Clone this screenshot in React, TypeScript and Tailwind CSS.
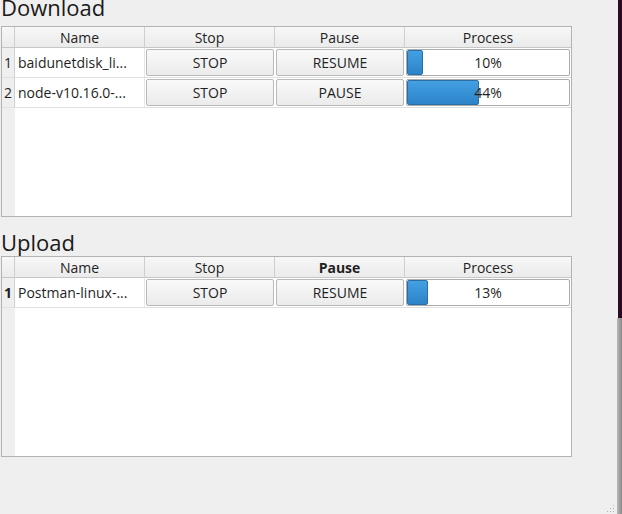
import React from "react";

type Row = { name: string; pause: string; pct: number };

const font = { fontFamily: '"Open Sans", "Noto Sans", sans-serif' };

function Btn({ label }: { label: string }) {
  return (
    <div className="h-full w-full p-[1px]">
      <div className="flex h-full w-full items-center justify-center rounded-[2px] border border-[#b9b9b9] bg-gradient-to-b from-[#f9f9f9] to-[#ebebeb] text-[14px] text-[#1f1f1f]">
        {label}
      </div>
    </div>
  );
}

function Progress({ pct }: { pct: number }) {
  return (
    <div className="h-full w-full p-[1px]">
      <div className="relative h-full w-full rounded-[2px] border border-[#ababab] bg-white">
        <div
          className="absolute left-0 top-0 bottom-0 rounded-[2px] border border-[#2a6ea6] bg-gradient-to-b from-[#43a0e3] to-[#2d84c8]"
          style={{ width: `${Math.max(Math.round(pct * 1.63), 16)}px` }}
        />
        <div className="absolute inset-0 flex items-center justify-center text-[14px] text-[#1f1f1f]">
          {pct}%
        </div>
      </div>
    </div>
  );
}

function Table({ rows, boldPause }: { rows: Row[]; boldPause?: boolean }) {
  const cols = "grid grid-cols-[13px_130px_130px_130px_166px]";
  return (
    <div className="ml-[1px] flex w-[571px] flex-1 flex-col border border-[#b3b3b3] bg-white">
      <div className={`${cols} h-[21px] border-b border-[#c6c6c6] bg-gradient-to-b from-[#f7f7f7] to-[#ebebeb] text-[14px] text-[#1f1f1f]`}>
        <div className="border-r border-[#cfcfcf]" />
        <div className="flex items-center justify-center border-r border-[#cfcfcf]">Name</div>
        <div className="flex items-center justify-center border-r border-[#cfcfcf]">Stop</div>
        <div className={`flex items-center justify-center border-r border-[#cfcfcf] ${boldPause ? "font-bold" : ""}`}>Pause</div>
        <div className="flex items-center justify-center">Process</div>
      </div>
      {rows.map((r, i) => (
        <div key={i} className={`${cols} h-[30px] border-b border-[#e0e0e0] text-[14px] text-[#1f1f1f]`}>
          <div className={`flex items-center justify-center bg-[#efefef] border-r border-[#d0d0d0] ${boldPause ? "font-bold" : ""}`}>{i + 1}</div>
          <div className="flex items-center pl-[3px] border-r border-[#e6e6e6] whitespace-nowrap overflow-hidden">{r.name}</div>
          <Btn label="STOP" />
          <Btn label={r.pause} />
          <Progress pct={r.pct} />
        </div>
      ))}
      <div className="flex flex-1">
        <div className="w-[13px] bg-[#efefef]" />
        <div className="flex-1 bg-white" />
      </div>
    </div>
  );
}

export default function App() {
  return (
    <div className="relative flex h-[514px] w-[622px] overflow-hidden bg-[#efefef]" style={font}>
      <div className="flex w-[617px] shrink-0 flex-col">
        <div className="mt-[-8px] h-[34px] pl-[1px] text-[22px] leading-[30px] text-[#1a1a1a]">Download</div>
        <div className="flex h-[191px] flex-col">
          <Table
            rows={[
              { name: "baidunetdisk_li...", pause: "RESUME", pct: 10 },
              { name: "node-v10.16.0-...", pause: "PAUSE", pct: 44 },
            ]}
          />
        </div>
        <div className="mt-[13px] h-[26px] pl-[1px] text-[22px] leading-[24px] text-[#1a1a1a]">Upload</div>
        <div className="flex h-[201px] flex-col">
          <Table boldPause rows={[{ name: "Postman-linux-...", pause: "RESUME", pct: 13 }]} />
        </div>
        <div className="flex-1" />
      </div>
      <div className="flex w-[5px] shrink-0 flex-col">
        <div className="flex h-[318px] w-[5px]">
          <div className="w-[1px] shrink-0 bg-[#efefef]" />
          <div className="w-[4px] shrink-0 bg-[#2c0a22]" />
        </div>
        <div className="w-[5px] flex-1 bg-gradient-to-r from-[#b8b8b8] to-[#8a8a8a]" />
      </div>
      <div className="absolute bottom-[2px] right-[8px] grid grid-cols-3 gap-[2px]">
        <div className="h-[1px] w-[1px]" />
        <div className="h-[1px] w-[1px]" />
        <div className="h-[1px] w-[1px] bg-[#b0b0b0]" />
        <div className="h-[1px] w-[1px]" />
        <div className="h-[1px] w-[1px] bg-[#b0b0b0]" />
        <div className="h-[1px] w-[1px] bg-[#b0b0b0]" />
        <div className="h-[1px] w-[1px] bg-[#b0b0b0]" />
        <div className="h-[1px] w-[1px] bg-[#b0b0b0]" />
        <div className="h-[1px] w-[1px] bg-[#b0b0b0]" />
      </div>
    </div>
  );
}
